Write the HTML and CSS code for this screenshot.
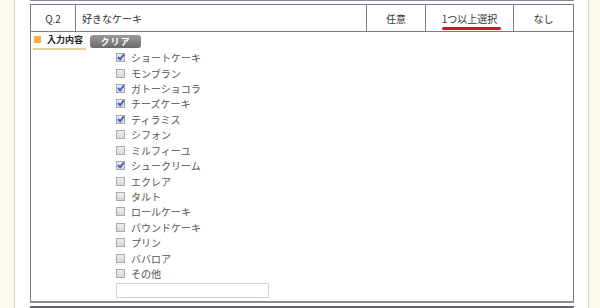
FILE: index.html
```html
<!DOCTYPE html>
<html lang="ja">

<head>
    <meta charset="UTF-8">
    <meta name="viewport" content="width=device-width, initial-scale=1.0">
    <title>アンケート</title>
    <link rel="stylesheet" href="styles.css">
</head>

<body>
    <div class="sheet">
        <div class="prev"></div>
        <table class="qtable">
            <tr class="head">
                <td class="no">Q.2</td>
                <td class="title">好きなケーキ</td>
                <td class="req">任意</td>
                <td class="type"><span class="mark">1つ以上選択</span></td>
                <td class="cond">なし</td>
            </tr>
            <tr>
                <td class="body" colspan="5">
                    <div class="field-head">
                        <span class="label"><i class="dot"></i>入力内容</span>
                        <span class="clear">クリア</span>
                    </div>
                    <ul class="choices">
                        <li><span class="box on"></span>ショートケーキ</li>
                        <li><span class="box"></span>モンブラン</li>
                        <li><span class="box on"></span>ガトーショコラ</li>
                        <li><span class="box on"></span>チーズケーキ</li>
                        <li><span class="box on"></span>ティラミス</li>
                        <li><span class="box"></span>シフォン</li>
                        <li><span class="box"></span>ミルフィーユ</li>
                        <li><span class="box on"></span>シュークリーム</li>
                        <li><span class="box"></span>エクレア</li>
                        <li><span class="box"></span>タルト</li>
                        <li><span class="box"></span>ロールケーキ</li>
                        <li><span class="box"></span>パウンドケーキ</li>
                        <li><span class="box"></span>プリン</li>
                        <li><span class="box"></span>ババロア</li>
                        <li><span class="box"></span>その他</li>
                    </ul>
                    <div class="other"><input class="other-input" type="text"></div>
                </td>
            </tr>
        </table>
        <div class="next"></div>
    </div>
</body>

</html>
```

FILE: styles.css
```css
body {
    margin: 0;
    background: #fdf8ec;
    font-family: "Noto Sans CJK JP", "Liberation Sans", sans-serif;
    font-size: 10px;
    color: #444;
}

.sheet {
    width: 544px;
    height: 308px;
    margin-left: 14px;
    padding: 0 14px 0 15px;
    background: #fff;
    border-left: 1px solid #d6d2ca;
    border-right: 1px solid #d6d2ca;
    overflow: hidden;
}

.prev {
    height: 1px;
    background: #8a8a94;
    margin-bottom: 3px;
}

.next {
    height: 2px;
    background: #66666e;
    margin-top: 3px;
}

.qtable {
    width: 544px;
    border-collapse: collapse;
    table-layout: fixed;
}

.qtable td {
    border: 1px solid #7c7c86;
    padding: 0;
}

.head td {
    height: 26px;
    text-align: center;
    color: #333;
}

.no {
    width: 44px;
}

.title {
    text-align: left !important;
    padding-left: 6px !important;
}

.req {
    width: 58px;
}

.type {
    width: 87px;
    position: relative;
}

.cond {
    width: 59px;
}

.mark::after {
    content: "";
    position: absolute;
    left: 16px;
    right: 12px;
    bottom: 1px;
    height: 3px;
    border-radius: 2px;
    background: #d8141e;
}

.body {
    height: 269px;
    vertical-align: top;
    border-bottom: 2px solid #8c8c94 !important;
}

.field-head {
    display: flex;
    align-items: center;
    gap: 4px;
    padding: 1px 0 0 2px;
}

.label {
    display: flex;
    align-items: center;
    gap: 6px;
    padding: 0 3px 2px 1px;
    border-bottom: 2px solid #e8cf9a;
    font-weight: bold;
    color: #222;
    font-size: 9px;
    line-height: 13px;
}

.dot {
    width: 7px;
    height: 7px;
    background: #f5b13c;
}

.clear {
    width: 51px;
    height: 13px;
    line-height: 13px;
    text-align: center;
    color: #fff;
    font-size: 9px;
    font-weight: bold;
    letter-spacing: 1px;
    border-radius: 3px;
    background: linear-gradient(#9a9a9a, #6a6a6a);
}

.choices {
    list-style: none;
    margin: 0 0 0 85px;
    padding: 0;
}

.choices li {
    display: flex;
    align-items: center;
    gap: 6px;
    height: 15.43px;
    color: #555;
}

.box {
    width: 7px;
    height: 7px;
    border: 1px solid #a8a8b0;
    background: linear-gradient(#eee, #d8d8dc);
    position: relative;
}

.box.on::after {
    content: "";
    position: absolute;
    left: 2px;
    top: -1px;
    width: 2px;
    height: 5px;
    border: solid #4a62c4;
    border-width: 0 2px 2px 0;
    transform: rotate(40deg);
}

.other {
    padding: 2px 0 0 85px;
}

.other-input {
    display: block;
    width: 153px;
    height: 15px;
    box-sizing: border-box;
    border: 1px solid #d4d4d8;
    padding: 0;
}
```
